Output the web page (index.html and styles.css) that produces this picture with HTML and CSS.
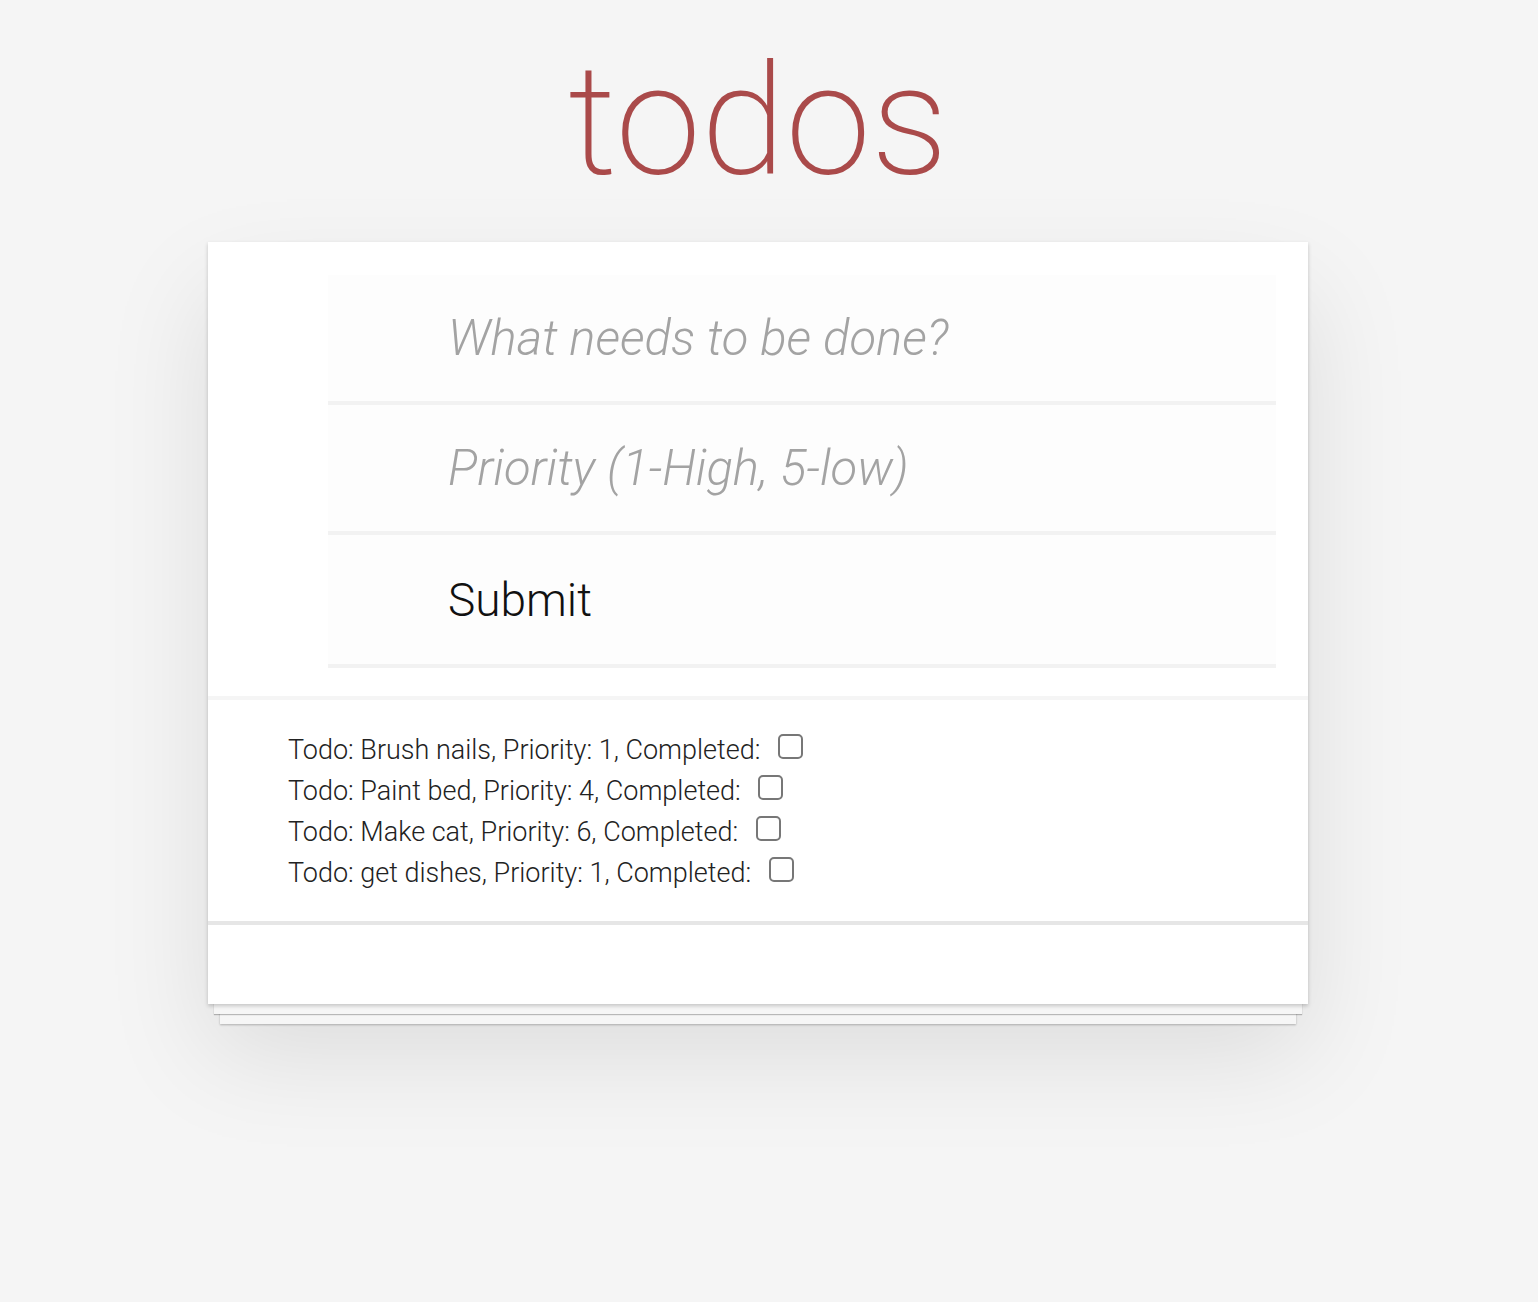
FILE: index.html
```html
<!DOCTYPE html>
<html lang="en">
<head>
  <meta charset="UTF-8">
  <meta name="viewport" content="width=device-width, initial-scale=1.0">
  <title>todos</title>
  <link rel="stylesheet" href="styles.css">
</head>
<body>
  <div class="todoapp">
    <h1 class="title">todos</h1>

    <section class="card">
      <form class="new-todo">
        <input class="field" type="text" placeholder="What needs to be done?">
        <input class="field" type="text" placeholder="Priority (1-High, 5-low)">
        <button class="field submit" type="button">Submit</button>
      </form>

      <ul class="todo-list">
        <li>Todo: Brush nails, Priority: 1, Completed: <input class="check" type="checkbox"></li>
        <li>Todo: Paint bed, Priority: 4, Completed: <input class="check" type="checkbox"></li>
        <li>Todo: Make cat, Priority: 6, Completed: <input class="check" type="checkbox"></li>
        <li>Todo: get dishes, Priority: 1, Completed: <input class="check" type="checkbox"></li>
      </ul>

      <footer class="footer"></footer>
    </section>
  </div>
</body>
</html>
```

FILE: styles.css
```css
body {
  margin: 0;
  padding: 0;
  background: #f5f5f5;
  font-family: 'Helvetica Neue', Roboto, Arial, sans-serif;
  font-weight: 300;
  color: #111;
}

.todoapp {
  width: 1100px;
  margin: 0 0 0 208px;
  padding: 45px 0 280px;
}

.title {
  margin: 0 0 43px;
  text-align: center;
  font-size: 154px;
  font-weight: 200;
  line-height: 1;
  color: #aa4a4a;
}

.card {
  position: relative;
  background: #fff;
  box-shadow:
    0 2px 4px rgba(0, 0, 0, 0.2),
    0 16px 0 -6px #f6f6f6,
    0 17px 1px -6px rgba(0, 0, 0, 0.25),
    0 32px 0 -12px #f6f6f6,
    0 33px 2px -12px rgba(0, 0, 0, 0.25),
    0 50px 100px rgba(0, 0, 0, 0.1);
}

.new-todo {
  display: flex;
  flex-direction: column;
  padding: 33px 32px 28px 120px;
  border-bottom: 4px solid #f5f5f5;
}

.field {
  box-sizing: border-box;
  height: 130px;
  margin: 0;
  padding: 0 0 0 120px;
  border: none;
  border-bottom: 4px solid #f2f2f2;
  background: #fdfdfd;
  font-family: inherit;
  font-size: 49px;
  font-weight: 300;
  color: #111;
  text-align: left;
  outline: none;
}

.field::placeholder {
  font-style: italic;
  color: #a3a3a3;
}

.submit {
  height: 133px;
  font-size: 46px;
  cursor: pointer;
}

.todo-list {
  margin: 0;
  padding: 30px 80px 27px;
  list-style: none;
  border-bottom: 4px solid #e6e6e6;
  font-size: 27px;
  line-height: 41px;
  color: #222;
}

.check {
  appearance: none;
  box-sizing: border-box;
  width: 25px;
  height: 25px;
  margin: 0 0 0 11px;
  border: 2px solid #777;
  border-radius: 5px;
  background: #fff;
  vertical-align: 0;
}

.footer {
  height: 79px;
}
```
